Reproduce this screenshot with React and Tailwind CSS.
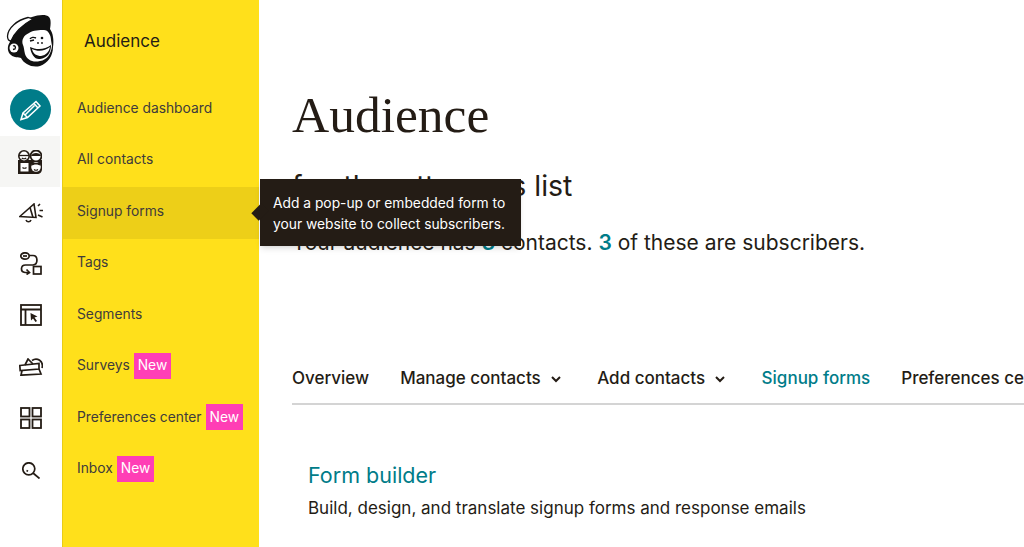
const navItems = [
  { label: "Audience dashboard" },
  { label: "All contacts" },
  { label: "Signup forms", active: true },
  { label: "Tags" },
  { label: "Segments" },
  { label: "Surveys", isNew: true },
  { label: "Preferences center", isNew: true },
  { label: "Inbox", isNew: true },
];

const tabs = [
  { label: "Overview" },
  { label: "Manage contacts", menu: true },
  { label: "Add contacts", menu: true },
  { label: "Signup forms", active: true },
  { label: "Preferences center" },
];

const ink = "#241c15";

function Logo() {
  // drawn in page pixels: the svg fills the 62x84 logo cell
  return (
    <svg width="62" height="84" viewBox="0 0 62 84">
      <path d="M12 33C14 24 24 20 32 17c6-2 14-3 17 0 2 2 2 7 1 12 3 4 4 11 3 18 0 9-5 16-13 19-8 2-16-2-19-8-2-1-7 0-10-3-4-3-4-9-1-13-1-3 0-7 2-9z" fill="#111" />
      <path d="M7.500 36C8 28 17 20 28 17.500l5 1.500C24 24 15 31 11 41c-2 0-3.500-2-3.500-5z" fill="#fff" stroke="#111" strokeWidth="1.300" />
      <circle cx="14" cy="48" r="4.500" fill="#fff" />
      <path d="M13 46c2-1 3 1 2 3l-2 .5" stroke="#111" strokeWidth="1.300" fill="none" />
      <path d="M23 45c-2-5 1-10 6-12 4-3 11-3 15-3 4 0 7 5 7 10l1 6c-1 8-5 14-12 15-7 2-13-1-15-7-1-4-1-7-2-9z" fill="#fff" />
      <path d="M30 47c6 3 15 3 21-2 0 8-4 13-11 14-5 1-9-5-10-12z" fill="#111" />
      <path d="M32 49c6 3 13 2 18-2-1 5-4 8-9 9-4 0-8-2-9-7z" fill="#fff" />
      <path d="M30 39c1-2 4-2 6-1M30 41l4-1" stroke="#111" strokeWidth="1.400" fill="none" />
      <circle cx="42" cy="38" r="1.300" fill="#111" />
      <circle cx="38" cy="43" r=".9" fill="#111" />
      <circle cx="42" cy="43" r=".9" fill="#111" />
    </svg>
  );
}

function PencilIcon() {
  return (
    <svg width="24" height="24" viewBox="0 0 24 24" fill="none" stroke="#fff" strokeWidth="1.500">
      <path d="M2 21.500l2-6.500L17 3.500l4 4.500L8.500 19.500z" />
      <path d="M15 5.500l4 4.500M4 15l4.500 4.500M6 17l9.500-9.500" />
    </svg>
  );
}

function AudienceIcon() {
  return (
    <svg width="24" height="24" viewBox="0 0 24 24">
      <path d="M0 10h24v9c0 3-2 5-5 5H0z" fill={ink} />
      <circle cx="6" cy="6" r="5.200" fill="#fff" stroke={ink} strokeWidth="1.600" />
      <circle cx="18" cy="6" r="5.500" fill="#fff" stroke={ink} strokeWidth="1.800" />
      <path d="M1 5.500h10" stroke={ink} strokeWidth="1.300" />
      <path d="M13 6c1-4 9-4 10 0z" fill={ink} />
      <path d="M3.800 8c1 1 3.400 1 4.400 0" stroke={ink} strokeWidth="1.100" fill="none" />
      <rect x="2.500" y="13" width="8" height="8.500" fill="#fff" />
      <path d="M4.500 17.500c1 1 3 1 4 0" stroke={ink} strokeWidth="1.100" fill="none" />
      <circle cx="18" cy="17" r="4.800" fill="#fff" />
      <path d="M13.500 16c2-2 7-2 9 0v-3h-9z" fill={ink} />
      <path d="M16 19.500c1 .8 3 .8 4 0" stroke={ink} strokeWidth="1.100" fill="none" />
    </svg>
  );
}

function CampaignIcon() {
  return (
    <svg width="24" height="20" viewBox="0 0 24 20" fill="none" stroke={ink} strokeWidth="1.600">
      <path d="M.8 13.500L15 1l2 13.500z" />
      <path d="M11 4.500l3 10" />
      <path d="M7 17c1 2.400 4 2.400 5 0" />
      <path d="M19 3l2-2M20.500 7.500h3.500M19 12l4.500 2" />
    </svg>
  );
}

function AutomationIcon() {
  return (
    <svg width="22" height="23" viewBox="0 0 22 23" fill="none" stroke={ink} strokeWidth="1.700">
      <ellipse cx="5" cy="4" rx="4.200" ry="3.200" />
      <path d="M3 4h4" />
      <path d="M9.500 3.500h3.500c5 0 5.500 9 0 9.500H5.500c-5 0-5.500 7-.5 7.500h4" />
      <path d="M6.500 17.500l3 3-3 2" />
      <rect x="13.500" y="14.500" width="7.500" height="7.500" />
    </svg>
  );
}

function WebsiteIcon() {
  return (
    <svg width="22" height="22" viewBox="0 0 22 22" fill="none" stroke={ink} strokeWidth="1.800">
      <rect x="1" y="1" width="20" height="20" />
      <path d="M1 5.500h20M5.500 5.500V21" />
      <path d="M10.500 9l7 3.500-3 1 2.500 3.500-1.500 1-2.500-3.500-2 2z" fill={ink} stroke="none" />
    </svg>
  );
}

function ContentIcon() {
  return (
    <svg width="24" height="18" viewBox="0 0 24 18" fill="none" stroke={ink} strokeWidth="1.700">
      <path d="M.8 7.500L20 5.500V11l-18.800 1.500z" />
      <path d="M3 12.500L2 17.200l20-1.200L20 11" />
      <path d="M6 7l3-6 5 5" />
      <path d="M13 2.500C18-1 25 3 23 10" />
    </svg>
  );
}

function GridIcon() {
  return (
    <svg width="22" height="22" viewBox="0 0 22 22" fill="none" stroke={ink} strokeWidth="1.800">
      <rect x="1" y="1" width="8.500" height="8.500" />
      <rect x="12.500" y="1" width="8.500" height="8.500" />
      <rect x="1" y="12.500" width="8.500" height="8.500" />
      <rect x="12.500" y="12.500" width="8.500" height="8.500" />
    </svg>
  );
}

function SearchIcon() {
  return (
    <svg className="mt-[2px]" width="18" height="17" viewBox="0 0 18 17" fill="none" stroke={ink} strokeWidth="1.700">
      <circle cx="6.800" cy="6.800" r="6" />
      <path d="M11 11l6.500 5.500" />
      <path d="M4.500 8.500l1.500 .7" />
    </svg>
  );
}

function IconRail() {
  const icons = [<AutomationIcon />, <WebsiteIcon />, <ContentIcon />, <GridIcon />, <SearchIcon />];
  return (
    <div className="w-[62px] shrink-0 bg-white">
      <div className="h-[84px]">
        <Logo />
      </div>
      <div className="w-[41px] h-[41px] mt-[5px] ml-[10px] rounded-full bg-[#007c89] flex items-center justify-center">
        <PencilIcon />
      </div>
      <div className="w-[60px] h-[51px] mt-[6px] bg-[#f6f6f4] flex items-center justify-center">
        <AudienceIcon />
      </div>
      <div className="h-[51px] pr-[1px] flex items-center justify-center">
        <CampaignIcon />
      </div>
      {icons.map((icon, i) => (
        <div key={i} className="h-[51.5px] pr-[1px] flex items-center justify-center">
          {icon}
        </div>
      ))}
    </div>
  );
}

function Sidebar() {
  return (
    <div className="relative w-[197px] shrink-0 bg-[#ffe01b] border-l border-[#e8cc18]">
      <div className="h-[84px] pl-[21px] flex items-center text-[17px] text-[#241c15]">Audience</div>
      {navItems.map((item) => (
        <div
          key={item.label}
          className={`h-[51.5px] pl-[14px] pb-[3px] flex items-center text-[13.8px] text-[#403b3b] ${item.active ? "bg-[#edcf18]" : ""}`}
        >
          {item.label}
          {item.isNew && (
            <span className="ml-[4px] h-[26px] px-[4px] flex items-center bg-[#ff3eb5] text-white">New</span>
          )}
        </div>
      ))}
      <div className="absolute left-[197px] top-[179px] z-10 w-[261px] h-[67px] bg-[#241c15] text-white text-[13.8px] leading-[21px] pl-[13px] pt-[14px] whitespace-nowrap shadow-md">
        <div className="absolute left-[-7px] top-[26px] w-[14px] h-[14px] rotate-45 scale-x-75 bg-[#241c15]" />
        Add a pop-up or embedded form to
        <br />
        your website to collect subscribers.
      </div>
    </div>
  );
}

export default function App() {
  return (
    <div className="h-[547px] w-[1024px] overflow-hidden flex bg-white text-[#241c15] font-['Inter','Liberation_Sans',sans-serif]">
      <IconRail />
      <Sidebar />
      <main className="flex-1 min-w-0 pl-[33px]">
        <h1 className="mt-[87px] text-[51.5px] leading-[56px] font-['Liberation_Serif',serif]">Audience</h1>
        <p className="mt-[25px] text-[28.5px] leading-[36px]">
          <span className="[word-spacing:6px]">for the </span>attorneys list
        </p>
        <p className="mt-[25px] text-[21px] leading-[28px]">
          Your audience has <b className="text-[#007c89] font-semibold">3</b> contacts.{" "}
          <b className="text-[#007c89] font-semibold">3</b> of these are subscribers.
        </p>
        <div className="mt-[96px] h-[52px] pt-[2px] border-b-2 border-[#d4d4d4] flex items-center gap-[31px] whitespace-nowrap text-[17px] font-medium">
          {tabs.map((tab) => (
            <span key={tab.label} className={`flex items-center gap-[10px] ${tab.active ? "text-[#007c89]" : ""}`}>
              {tab.label}
              {tab.menu && (
                <svg className="mr-[5.5px]" width="10" height="7" viewBox="0 0 10 7" fill="none" stroke="#241c15" strokeWidth="2">
                  <path d="M1 1l4 4 4-4" />
                </svg>
              )}
            </span>
          ))}
        </div>
        <div className="pl-[16px] mt-[55px]">
          <h2 className="text-[21.5px] leading-[30px] text-[#007c89]">Form builder</h2>
          <p className="mt-[6px] text-[17px] leading-[24px]">Build, design, and translate signup forms and response emails</p>
        </div>
      </main>
    </div>
  );
}
